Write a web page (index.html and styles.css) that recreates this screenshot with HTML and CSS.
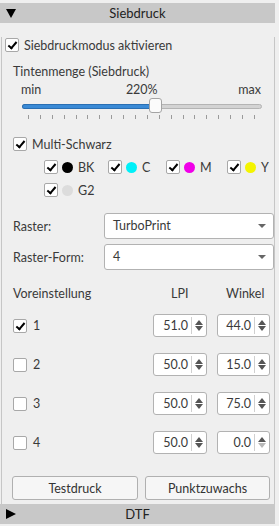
FILE: index.html
```html
<!DOCTYPE html>
<html lang="de">
<head>
    <meta charset="UTF-8">
    <meta name="viewport" content="width=device-width, initial-scale=1.0">
    <title>Siebdruck</title>
    <link rel="stylesheet" href="styles.css">
</head>
<body>
    <div class="panel">
        <div class="section-head">
            <span class="arrow-down"></span>
            Siebdruck
        </div>

        <div class="section-body">
            <div class="check first-check">
                <span class="box checked"></span>Siebdruckmodus aktivieren
            </div>

            <div class="group-title">Tintenmenge (Siebdruck)</div>
            <div class="slider-labels">
                <span>min</span><span>220%</span><span>max</span>
            </div>
            <div class="slider">
                <div class="groove"><div class="fill"></div></div>
                <div class="handle"></div>
            </div>
            <div class="ticks">
                <i></i><i></i><i></i><i></i><i></i><i></i><i></i><i></i><i></i><i></i>
                <i></i><i></i><i></i><i></i><i></i><i></i><i></i><i></i><i></i><i></i>
            </div>

            <div class="check multi">
                <span class="box checked"></span>Multi-Schwarz
            </div>
            <div class="inks">
                <div class="ink"><span class="box checked"></span><span class="dot black"></span>BK</div>
                <div class="ink"><span class="box checked"></span><span class="dot cyan"></span>C</div>
                <div class="ink"><span class="box checked"></span><span class="dot magenta"></span>M</div>
                <div class="ink"><span class="box checked"></span><span class="dot yellow"></span>Y</div>
                <div class="ink"><span class="box checked"></span><span class="dot grey"></span>G2</div>
            </div>

            <div class="form-row raster">
                <span class="form-label">Raster:</span>
                <div class="combo">TurboPrint<span class="combo-arrow"></span></div>
            </div>
            <div class="form-row">
                <span class="form-label">Raster-Form:</span>
                <div class="combo">4<span class="combo-arrow"></span></div>
            </div>

            <div class="preset-head">
                <span class="preset-title">Voreinstellung</span>
                <span class="col-lpi">LPI</span>
                <span class="col-winkel">Winkel</span>
            </div>

            <div class="presets">
                <div class="preset-row">
                    <div class="preset-check"><span class="box checked"></span>1</div>
                    <div class="spin lpi">51.0<span class="spin-btns"><span class="up"></span><span class="down"></span></span></div>
                    <div class="spin winkel">44.0<span class="spin-btns"><span class="up"></span><span class="down"></span></span></div>
                </div>
                <div class="preset-row">
                    <div class="preset-check"><span class="box"></span>2</div>
                    <div class="spin lpi">50.0<span class="spin-btns"><span class="up"></span><span class="down"></span></span></div>
                    <div class="spin winkel">15.0<span class="spin-btns"><span class="up"></span><span class="down"></span></span></div>
                </div>
                <div class="preset-row">
                    <div class="preset-check"><span class="box"></span>3</div>
                    <div class="spin lpi">50.0<span class="spin-btns"><span class="up"></span><span class="down"></span></span></div>
                    <div class="spin winkel">75.0<span class="spin-btns"><span class="up"></span><span class="down"></span></span></div>
                </div>
                <div class="preset-row">
                    <div class="preset-check"><span class="box"></span>4</div>
                    <div class="spin lpi">50.0<span class="spin-btns"><span class="up"></span><span class="down"></span></span></div>
                    <div class="spin winkel">0.0<span class="spin-btns"><span class="up"></span><span class="down off"></span></span></div>
                </div>
            </div>

            <div class="buttons">
                <button class="btn">Testdruck</button>
                <button class="btn">Punktzuwachs</button>
            </div>
        </div>

        <div class="section-head">
            <span class="arrow-right"></span>
            DTF
        </div>
    </div>
</body>
</html>
```

FILE: styles.css
```css
body {
    margin: 0;
    background-color: #efefef;
    font-family: Lato, 'Open Sans', sans-serif;
    font-size: 12.5px;
    color: #3a3a3a;
}
.panel {
    width: 275px;
    padding-top: 3px;
}
.section-head {
    position: relative;
    height: 20px;
    line-height: 20px;
    background-color: #c8c8c8;
    text-align: center;
    font-size: 13px;
    color: #222;
}
.arrow-down {
    position: absolute;
    left: 6px;
    top: 6px;
    width: 0;
    height: 0;
    border-left: 5px solid transparent;
    border-right: 5px solid transparent;
    border-top: 9px solid #000;
}
.arrow-right {
    position: absolute;
    left: 6px;
    top: 5px;
    width: 0;
    height: 0;
    border-top: 5px solid transparent;
    border-bottom: 5px solid transparent;
    border-left: 10px solid #000;
}
.section-body {
    border-left: 1px solid #c6c6c6;
    border-right: 1px solid #c6c6c6;
    padding: 0 0 4px 0;
    margin-left: 1px;
}

/* checkboxes */
.box {
    display: inline-block;
    box-sizing: border-box;
    width: 14px;
    height: 14px;
    background-color: #fff;
    border: 1px solid #a8a8a8;
    border-radius: 2px;
    position: relative;
    flex-shrink: 0;
}
.box.checked::after {
    content: "";
    position: absolute;
    left: 4px;
    top: 1px;
    width: 3px;
    height: 7px;
    border-right: 2px solid #000;
    border-bottom: 2px solid #000;
    transform: rotate(40deg);
}
.check {
    display: flex;
    align-items: center;
    height: 16px;
}
.check .box {
    margin-right: 5px;
}
.first-check {
    margin-top: 14px;
    padding-left: 3px;
}
.group-title {
    margin-top: 11px;
    padding-left: 11px;
    height: 16px;
    line-height: 16px;
}
.slider-labels {
    display: flex;
    justify-content: space-between;
    padding: 0 13px 0 19px;
    margin-top: 2px;
    height: 16px;
    line-height: 16px;
}
.slider-labels span:nth-child(2) {
    margin-left: 4px;
}
.slider {
    position: relative;
    height: 16px;
    margin: 0 12px 0 20px;
}
.groove {
    position: absolute;
    left: 0;
    right: 0;
    top: 6px;
    height: 5px;
    box-sizing: border-box;
    background-color: #d3d3d3;
    border: 1px solid #b4b4b4;
    border-radius: 3px;
}
.fill {
    width: 130px;
    height: 100%;
    background-color: #3a8ad6;
    border-radius: 3px;
    box-shadow: 0 0 0 1px #2a6fb3;
}
.handle {
    position: absolute;
    left: 127px;
    top: 0;
    width: 13px;
    height: 15px;
    box-sizing: border-box;
    background-color: #fbfbfb;
    border: 1px solid #a4a4a4;
    border-radius: 3px;
}
.ticks {
    display: flex;
    justify-content: space-between;
    margin: 1px 19px 0 26px;
    height: 5px;
}
.ticks i {
    width: 1px;
    height: 4px;
    background-color: #9a9a9a;
}
.multi {
    margin-top: 16px;
    padding-left: 11px;
}
.inks {
    display: flex;
    flex-wrap: wrap;
    padding-left: 42px;
    margin-top: 7px;
    row-gap: 7px;
}
.ink {
    display: flex;
    align-items: center;
    height: 16px;
}
.ink:nth-child(1) { width: 64px; }
.ink:nth-child(2) { width: 58px; }
.ink:nth-child(3) { width: 61px; }
.ink:nth-child(5) { flex-basis: 100%; }
.dot {
    display: inline-block;
    width: 11px;
    height: 11px;
    border-radius: 50%;
    margin: 0 5px 0 4px;
}
.dot.black { background-color: #000; }
.dot.cyan { background-color: #00f0f8; }
.dot.magenta { background-color: #f000e8; }
.dot.yellow { background-color: #f4f400; }
.dot.grey { background-color: #dcdcdc; }

/* form rows */
.form-row {
    display: flex;
    align-items: center;
    padding-left: 11px;
    margin-top: 5px;
}
.form-row.raster {
    margin-top: 15px;
}
.form-label {
    width: 91px;
}
.combo {
    position: relative;
    box-sizing: border-box;
    width: 170px;
    height: 26px;
    line-height: 24px;
    padding-left: 8px;
    background-color: #fff;
    border: 1px solid #b2b2b2;
    border-radius: 3px;
}
.combo-arrow {
    position: absolute;
    right: 7px;
    top: 10px;
    width: 0;
    height: 0;
    border-left: 4px solid transparent;
    border-right: 4px solid transparent;
    border-top: 4px solid #666;
}

/* presets */
.preset-head {
    display: flex;
    align-items: center;
    height: 16px;
    margin-top: 15px;
    padding-left: 11px;
}
.preset-title {
    width: 158px;
}
.col-lpi {
    width: 55px;
}
.presets {
    display: flex;
    flex-direction: column;
    gap: 16px;
    margin-top: 13px;
}
.preset-row {
    display: flex;
    align-items: center;
    height: 23px;
    padding-left: 11px;
}
.preset-check {
    display: flex;
    align-items: center;
    width: 140px;
}
.preset-check .box {
    margin-right: 6px;
}
.spin {
    position: relative;
    box-sizing: border-box;
    height: 23px;
    line-height: 21px;
    background-color: #fff;
    border: 1px solid #b2b2b2;
    border-radius: 3px;
    text-align: right;
    padding-right: 18px;
}
.spin.lpi {
    width: 54px;
    margin-right: 10px;
}
.spin.winkel {
    width: 53px;
}
.spin-btns {
    position: absolute;
    right: 0;
    top: 2px;
    bottom: 2px;
    width: 14px;
    border-left: 1px solid #d0d0d0;
}
.spin-btns .up,
.spin-btns .down {
    position: absolute;
    left: 3px;
    width: 0;
    height: 0;
    border-left: 4px solid transparent;
    border-right: 4px solid transparent;
}
.spin-btns .up {
    top: 3px;
    border-bottom: 5px solid #555;
}
.spin-btns .down {
    bottom: 3px;
    border-top: 5px solid #555;
}
.spin-btns .down.off {
    border-top-color: #b8b8b8;
}

.buttons {
    display: flex;
    gap: 7px;
    margin-top: 22px;
    padding-left: 10px;
}
.btn {
    box-sizing: border-box;
    width: 126px;
    height: 24px;
    font-family: inherit;
    font-size: 12.5px;
    color: #333;
    background-color: #f6f6f6;
    border: 1px solid #b0b0b0;
    border-radius: 3px;
    padding: 0;
}
.btn + .btn {
    width: 125px;
}
```
